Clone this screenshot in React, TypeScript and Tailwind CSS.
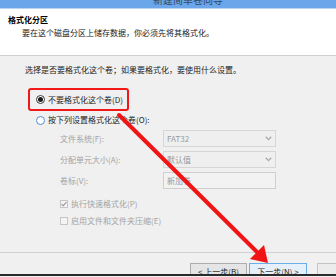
import React from "react";

function Chevron() {
  return (
    <svg width="7" height="5" viewBox="0 0 7 5" className="mr-[3px]">
      <path d="M0.8 0.8 L3.5 3.6 L6.2 0.8" fill="none" stroke="#a8a8a8" strokeWidth="1.3" />
    </svg>
  );
}

export default function App() {
  return (
    <div className="relative w-[336px] h-[277px] overflow-hidden bg-[#f0f0f0] text-[8px] leading-[10px] text-[#1e1e1e] font-['Noto_Sans_CJK_SC','Noto_Sans',sans-serif]">
      {/* title bar */}
      <div className="h-[8px] bg-[#6aa6e9] overflow-hidden pl-[153px]">
        <div className="-mt-[6px] text-[10px] leading-[12px] text-[#34475e]">新建简单卷向导</div>
      </div>
      <div className="h-[1px] bg-[#b9d4f2]" />
      {/* header */}
      <div className="h-[47px] bg-white border-b border-[#cfcfcf] pt-[6px]">
        <div className="pl-[8px] font-bold text-black">格式化分区</div>
        <div className="pl-[22px] mt-[3px] text-[#222]">要在这个磁盘分区上储存数据，你必须先将其格式化。</div>
      </div>
      {/* body */}
      <div className="h-[196px] pt-[9px] flex flex-col">
        <div className="pl-[25px] text-[#222]">选择是否要格式化这个卷；如果要格式化，要使用什么设置。</div>
        <div className="ml-[28px] mt-[13px] w-[101px] h-[23px] border-2 border-[#f01818] rounded-[3px] flex items-center pl-[6px]">
          <span className="w-[9px] h-[9px] rounded-full border border-[#3a3a3a] bg-white flex items-center justify-center">
            <span className="w-[5px] h-[5px] rounded-full bg-[#1a1a1a]" />
          </span>
          <span className="ml-[3px]">不要格式化这个卷(D)</span>
        </div>
        <div className="ml-[36px] mt-[4px] flex items-center">
          <span className="w-[9px] h-[9px] rounded-full border border-[#4d8fd6] bg-white" />
          <span className="ml-[3px]">按下列设置格式化这个卷(O):</span>
        </div>
        <div className="mt-[5px] grid grid-cols-[103px_113px] gap-y-[4px] pl-[60px] text-[#a3a3a3]">
          <div className="h-[17px] flex items-center">文件系统(F):</div>
          <div className="h-[17px] border border-[#d6d6d6] bg-[#efefef] flex items-center justify-between pl-[3px] text-[#9a9a9a]">
            <span>FAT32</span>
            <Chevron />
          </div>
          <div className="h-[17px] flex items-center">分配单元大小(A):</div>
          <div className="h-[17px] border border-[#d6d6d6] bg-[#efefef] flex items-center justify-between pl-[3px] text-[#9a9a9a]">
            <span>默认值</span>
            <Chevron />
          </div>
          <div className="h-[17px] flex items-center">卷标(V):</div>
          <div className="h-[17px] border border-[#cfcfcf] bg-[#f2f2f2] flex items-center pl-[3px] text-[#9a9a9a]">
            <span>新加卷</span>
          </div>
        </div>
        <div className="ml-[60px] mt-[10px] flex items-center text-[#a3a3a3]">
          <span className="w-[8px] h-[8px] border border-[#c6c6c6] bg-[#f4f4f4] flex items-center justify-center">
            <svg width="6" height="6" viewBox="0 0 6 6">
              <path d="M0.6 3.2 L2.3 4.8 L5.4 1" fill="none" stroke="#8f8f8f" strokeWidth="1.1" />
            </svg>
          </span>
          <span className="ml-[3px]">执行快速格式化(P)</span>
        </div>
        <div className="ml-[60px] mt-[7px] flex items-center text-[#a3a3a3]">
          <span className="w-[8px] h-[8px] border border-[#c6c6c6] bg-[#f4f4f4]" />
          <span className="ml-[3px]">启用文件和文件夹压缩(E)</span>
        </div>
      </div>
      {/* footer */}
      <div className="h-[1px] bg-[#d2d2d2]" />
      <div className="h-[21px] bg-[#f0f0f0] pt-[10px] pl-[190px] flex items-start overflow-hidden">
        <div className="w-[57px] h-[17px] shrink-0 border border-[#adadad] bg-[#e5e5e5] flex items-center justify-center">&lt; 上一步(B)</div>
        <div className="ml-[2px] w-[58px] h-[17px] shrink-0 border border-[#6aaee8] bg-[#e5f0fb] flex items-center justify-center">下一步(N) &gt;</div>
        <div className="ml-[10px] w-[40px] h-[17px] shrink-0 border border-[#c4c4c4] bg-[#ececec]" />
      </div>
      <div className="h-[2px] bg-[#2b2b2b]" />
      {/* annotation arrow */}
      <svg className="absolute inset-0 pointer-events-none" width="336" height="277" viewBox="0 0 336 277">
        <line x1="119" y1="115" x2="257" y2="252" stroke="#f01414" strokeWidth="4" strokeLinecap="round" />
        <polygon points="268,263 250,259 264,245" fill="#f01414" />
      </svg>
    </div>
  );
}
